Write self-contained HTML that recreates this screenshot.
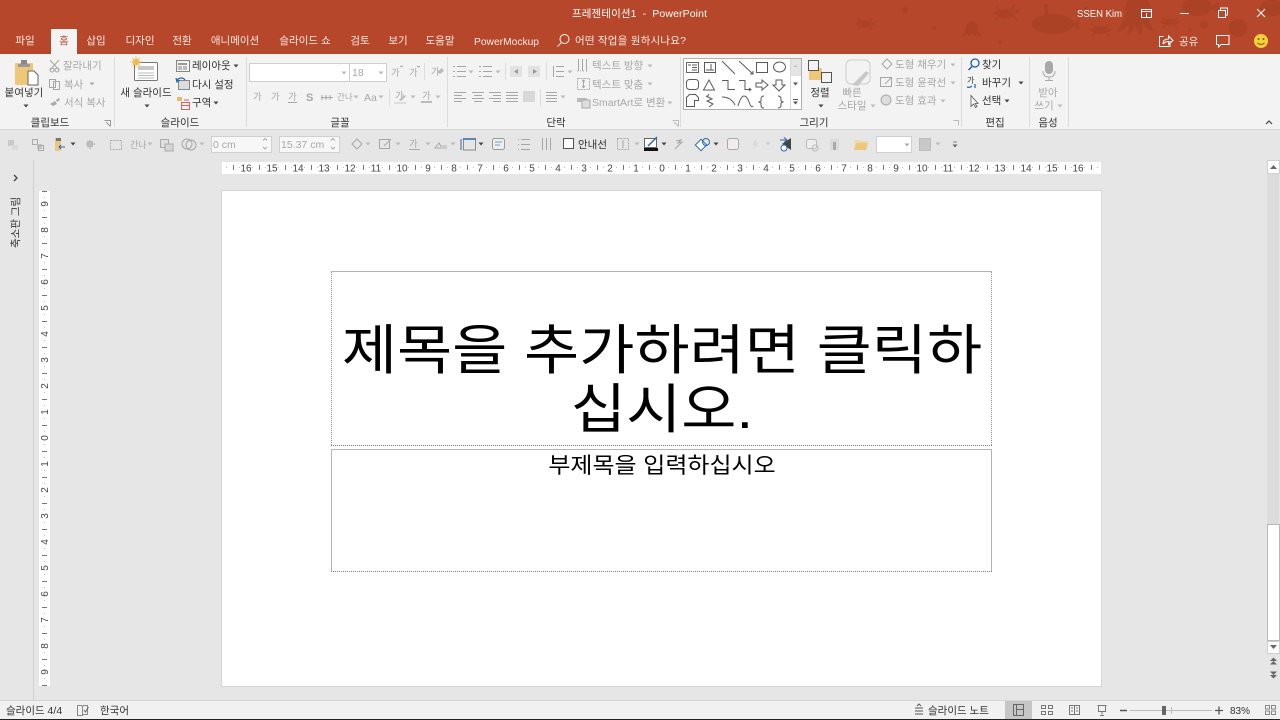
<!DOCTYPE html>
<html lang="ko"><head><meta charset="utf-8"><title>프레젠테이션1 - PowerPoint</title>
<style>
html,body{margin:0;padding:0;width:1280px;height:720px;overflow:hidden;background:#e6e6e6}
svg{display:block}
text{font-family:"Liberation Sans","Noto Sans CJK KR",sans-serif;font-size:10.5px;white-space:pre}
.g{fill:#a8a8a8}.d{fill:#333}.w{fill:#fff}.w2{fill:#fbe9e3}
.m{text-anchor:middle}
.ln{fill:none;stroke:#a6a6a6;stroke-width:1}
.dk{fill:none;stroke:#555;stroke-width:1}
.bl{fill:none;stroke:#2b6aa8;stroke-width:1.3}
.wl{fill:none;stroke:#fff;stroke-width:1}
.sep{stroke:#dcdcdc;stroke-width:1}
.r{font-size:10px;fill:#444;text-anchor:middle}
</style></head><body>
<svg width="1280" height="720" viewBox="0 0 1280 720" xmlns="http://www.w3.org/2000/svg">
<defs>
<path id="a" d="M-2.5-1.5h5l-2.500 3z"/>
<pattern id="ht" x="662" y="162" width="26" height="12" patternUnits="userSpaceOnUse">
<rect x="6" y="5" width="1" height="1" fill="#bbb"/><rect x="13" y="3" width="1" height="5" fill="#777"/><rect x="19" y="5" width="1" height="1" fill="#bbb"/>
</pattern>
<pattern id="vt" x="39" y="438" width="11" height="26" patternUnits="userSpaceOnUse">
<rect x="5" y="6" width="1" height="1" fill="#bbb"/><rect x="3" y="13" width="5" height="1" fill="#777"/><rect x="5" y="19" width="1" height="1" fill="#bbb"/>
</pattern>
</defs>

<!-- backgrounds -->
<rect width="1280" height="720" fill="#e6e6e6"/>
<rect width="1280" height="54" fill="#b7472a"/>
<rect y="54" width="1280" height="75" fill="#f3f3f3"/>
<rect y="129" width="1280" height="1" fill="#d6d6d6"/>

<!-- title bar decoration -->
<g fill="#ab4226">
<ellipse cx="1053" cy="24" rx="21" ry="10"/><path d="M1072 24l7-6v12z"/><rect x="1045" y="8" width="3" height="8"/><circle cx="1046" cy="6" r="2.500"/>
<circle cx="1138" cy="9" r="13"/><path d="M1126 12q-6 16-10 20q8 0 13-9q-1 8-2 13q6-3 8-12q2 9 6 12q2-6 1-13q5 8 13 8q-6-6-9-19z"/>
<circle cx="972" cy="27" r="6"/><path d="M966 29q-3 6-5 8q5 0 7-4v4q3-2 4-4q1 3 4 4v-4q2 4 7 4q-3-3-6-8z"/>
<ellipse cx="1005" cy="14" rx="7" ry="5"/><path d="M996 6l4 5-6 2 6 2-5 5M1015 4l-4 6 7 1-6 4 5 5" fill="none" stroke="#ab4226" stroke-width="1.600"/>
<ellipse cx="1100" cy="30" rx="6" ry="4"/><path d="M1091 23l5 5-6 2 6 2-4 4M1109 24l-4 4 6 2-6 2 5 4" fill="none" stroke="#ab4226" stroke-width="1.500"/>
<ellipse cx="865" cy="24" rx="5" ry="4"/><path d="M857 18l4 4-5 2 5 2-4 4M873 18l-4 4 5 2-5 2 4 4" fill="none" stroke="#ab4226" stroke-width="1.400"/>
<ellipse cx="1170" cy="22" rx="5" ry="3.500"/><path d="M1162 17l4 4-5 1 5 2-3 4M1178 17l-4 4 5 1-5 2 3 4" fill="none" stroke="#ab4226" stroke-width="1.400"/>
<ellipse cx="1197" cy="7" rx="15" ry="9"/><path d="M1210 8l9-7v13z"/>
<ellipse cx="1272" cy="8" rx="12" ry="8"/>
<circle cx="1238" cy="28" r="9"/><circle cx="1204" cy="25" r="4"/><circle cx="905" cy="10" r="3"/><circle cx="934" cy="28" r="2"/><circle cx="1000" cy="42" r="2"/><circle cx="1086" cy="8" r="2"/><circle cx="1190" cy="30" r="1.500"/>
</g>

<!-- title text -->
<text x="572" y="17" class="w" textLength="135" lengthAdjust="spacing">프레젠테이션1  -  PowerPoint</text>
<text x="1077" y="17" class="w" textLength="45" lengthAdjust="spacingAndGlyphs">SSEN Kim</text>
<!-- window buttons -->
<path class="wl" d="M1141.500 9.500h10v8h-10zM1141.500 11.500h10M1146.500 17v-4"/>
<path class="wl" d="M1180 13.500h9"/>
<path class="wl" d="M1218.500 10.500h7v7h-7zM1220.500 10v-2h7v7h-2"/>
<path class="wl" d="M1257 9l8 8M1265 9l-8 8"/>

<!-- tabs -->
<rect x="51" y="29" width="26" height="25" fill="#f3f3f3"/>
<text x="25" y="44" class="m w2">파일</text>
<text x="96" y="44" class="m w2">삽입</text>
<text x="140" y="44" class="m w2">디자인</text>
<text x="182" y="44" class="m w2">전환</text>
<text x="235" y="44" class="m w2">애니메이션</text>
<text x="305" y="44" class="m w2">슬라이드 쇼</text>
<text x="360" y="44" class="m w2">검토</text>
<text x="398" y="44" class="m w2">보기</text>
<text x="440" y="44" class="m w2">도움말</text>
<text x="474" y="45" class="w2" textLength="65" lengthAdjust="spacingAndGlyphs">PowerMockup</text>
<text x="575" y="44" class="w2" textLength="111" lengthAdjust="spacing">어떤 작업을 원하시나요?</text>
<text x="64" y="44" class="m" fill="#b7472a">홈</text>
<circle cx="564.500" cy="39" r="4.500" class="wl"/><path class="wl" d="M561 43l-3.500 3.500"/>
<path class="wl" d="M1170 41v5.500h-10.500v-10h4M1163 44q0-5 5.500-5v-3l4.500 4.500-4.500 4v-3q-3 0-5.500 2.500"/>
<text x="1179" y="45" class="w2">공유</text>
<path class="wl" d="M1216.500 35.500h12.500v9h-8l-2.500 2.500v-2.500h-2z"/>
<circle cx="1261" cy="41" r="7" fill="#f7d038"/><circle cx="1258.500" cy="39" r="1" fill="#6a5a10"/><circle cx="1263.500" cy="39" r="1" fill="#6a5a10"/><path d="M1257.500 43q3.500 3 7 0" fill="none" stroke="#6a5a10"/>

<!-- group separators -->
<path class="sep" d="M114.500 57v70M246.500 57v70M447.500 57v70M680.500 57v70M961.500 57v70M1029.500 57v70M1068.500 57v70"/>

<!-- clipboard -->
<rect x="15" y="63" width="18" height="22" rx="1" fill="#eec778"/><rect x="21" y="60" width="6" height="5" fill="#888"/><rect x="18" y="64" width="12" height="3" fill="#999"/>
<path d="M28 71h6l4 4v10h-10z" fill="#fff" stroke="#666"/>
<text x="24" y="96" class="m d">붙여넣기</text><use href="#a" x="26" y="106" fill="#444"/>
<path class="ln" d="M50 60l9 10M59 60l-9 10"/><circle cx="52" cy="70" r="2" class="ln"/><circle cx="57" cy="70" r="2" class="ln"/>
<text x="63" y="69" class="g">잘라내기</text>
<path class="ln" d="M49.500 79.500h6v8h-6zM53.500 81.500h6v8h-6z"/>
<text x="64" y="88" class="g">복사</text><use href="#a" x="92" y="84" fill="#aaa"/>
<path d="M50 104l5-3 2 3-4 2zM56 100l3-2 1 2-3 2z" fill="#aaa"/>
<text x="64" y="106" class="g">서식 복사</text>
<text x="50" y="126" class="m d">클립보드</text>
<path d="M104.500 120.500h6v6M106 122l4 4" fill="none" stroke="#999"/>

<!-- slides -->
<rect x="134.500" y="62.500" width="23" height="18" rx="1" fill="#fff" stroke="#777"/><rect x="138" y="66" width="16" height="4" fill="#c8c8c8"/><path d="M138 73h16M138 75.500h16M138 78h16" stroke="#bbb"/>
<circle cx="136" cy="62" r="3.500" fill="#f3c55f"/><path d="M136 56v12M130 62h12M132 58l8 8M140 58l-8 8" stroke="#eeb84a" stroke-width=".8"/>
<text x="146" y="96" class="m d">새 슬라이드</text><use href="#a" x="147" y="106" fill="#444"/>
<path class="dk" d="M176.500 60.500h13v11h-13z" stroke-opacity=".7"/><rect x="178" y="63" width="9" height="2" fill="#999"/><rect x="178" y="66" width="4" height="4" fill="#bbb"/><rect x="183" y="66" width="4" height="4" fill="#bbb"/>
<text x="192" y="69" class="d">레이아웃</text><use href="#a" x="236" y="66" fill="#444"/>
<rect x="178.500" y="80.500" width="11" height="9" fill="#ddd" stroke="#888"/><path class="bl" d="M177 81q1-3 4-3t4 2M176 78l1 4 3-2"/>
<text x="192" y="88" class="d">다시 설정</text>
<rect x="177" y="97" width="5" height="4" fill="#f0b968"/><path d="M181.500 102.500h8v7h-8zM181.500 105.500h8" fill="none" stroke="#c66"/><path d="M184 100h5" stroke="#c66"/>
<text x="192" y="106" class="d">구역</text><use href="#a" x="216" y="103" fill="#444"/>
<text x="180" y="126" class="m d">슬라이드</text>

<!-- font -->
<rect x="249.500" y="63.500" width="100" height="18" fill="#fff" stroke="#cfcfcf"/><rect x="349.500" y="63.500" width="37" height="18" fill="#fff" stroke="#cfcfcf"/>
<use href="#a" x="344" y="73" fill="#bbb"/><use href="#a" x="381" y="73" fill="#bbb"/>
<text x="352" y="76" class="g">18</text>
<text x="391" y="76" class="g" style="font-size:9.500px">가</text><path class="ln" d="M400 67l1.500-1 1.500 1"/>
<text x="409" y="76" class="g" style="font-size:9.500px">가</text><path class="ln" d="M417 66l1.500 1 1.500-1"/>
<path class="sep" d="M424.500 63v17"/>
<text x="431" y="75" class="g" style="font-size:9.500px">가</text><path d="M437 72l5-4 2 3-4 3z" fill="#bbb"/>
<text x="253" y="100" class="g" style="font-size:9.500px">가</text>
<text x="271" y="100" class="g" style="font-size:9.500px">가</text>
<text x="288" y="100" class="g" style="font-size:9.500px">가</text>
<path class="ln" d="M288 102.500h9"/>
<text x="306" y="101" class="g" style="font-weight:bold;font-size:11px">S</text>
<path class="ln" d="M321 97.500h12M322 95v5M326 95v5M330 95v5"/>
<text x="337" y="100" class="g" style="font-size:8.500px">간나</text><use href="#a" x="356" y="97" fill="#bbb"/>
<text x="364" y="101" class="g">Aa</text><use href="#a" x="381" y="97" fill="#bbb"/>
<path class="sep" d="M389.500 89v17"/>
<text x="395" y="99" class="g" style="font-size:9.500px">가</text><path d="M399 100l5-5 2 1-5 5z" fill="#bbb"/><rect x="394" y="102" width="12" height="2" fill="#ddd"/><use href="#a" x="413" y="97" fill="#bbb"/>
<text x="422" y="99" class="g" style="font-size:9.500px">가</text><rect x="421" y="101" width="11" height="2" fill="#bbb"/><use href="#a" x="438" y="97" fill="#bbb"/>
<text x="340" y="126" class="m d">글꼴</text>

<!-- paragraph -->
<path class="ln" d="M457 66.500h9M457 71.500h9M457 76.500h9M453 66.500h2M453 71.500h2M453 76.500h2"/><use href="#a" x="471" y="72" fill="#bbb"/>
<path class="ln" d="M483 66.500h9M483 71.500h9M483 76.500h9M479 66.500h2M479 71.500h2M479 76.500h2"/><use href="#a" x="498" y="72" fill="#bbb"/>
<path class="sep" d="M505.500 63v17"/>
<rect x="510" y="66" width="12" height="11" fill="#e2e2e2"/><path d="M518 69l-4 2.500 4 2.500z" fill="#999"/>
<rect x="528" y="66" width="12" height="11" fill="#e2e2e2"/><path d="M533 69l4 2.500-4 2.500z" fill="#999"/>
<path class="sep" d="M546.500 63v17"/>
<path class="ln" d="M556 66.500h8M556 71.500h8M556 76.500h8M553.500 66v11"/><use href="#a" x="570" y="72" fill="#bbb"/>
<path class="ln" d="M454 92.500h12M454 95.500h8M454 98.500h12M454 101.500h8"/>
<path class="ln" d="M472 92.500h12M474 95.500h8M472 98.500h12M474 101.500h8"/>
<path class="ln" d="M489 92.500h12M493 95.500h8M489 98.500h12M493 101.500h8"/>
<path class="ln" d="M506 92.500h12M506 95.500h12M506 98.500h12M506 101.500h12"/>
<rect x="523" y="91" width="12" height="11" fill="#d8d8d8"/>
<path class="sep" d="M540.500 89v17"/>
<path class="ln" d="M546 92.500h11M546 95.500h11M546 98.500h11M546 101.500h11"/><use href="#a" x="563" y="97" fill="#bbb"/>
<path class="ln" d="M578.500 59v12M582.500 59v12M586.500 59v12"/><path d="M577 71h11" stroke="#aaa" stroke-dasharray="1 2"/>
<text x="592" y="69" class="g">텍스트 방향</text><use href="#a" x="650" y="66" fill="#bbb"/>
<rect x="577.500" y="78.500" width="12" height="11" fill="none" stroke="#aaa" stroke-dasharray="2 1"/><path class="ln" d="M583.500 80v7M582 81.500l1.500-1.500 1.500 1.500M582 86l1.500 1.500 1.500-1.500"/>
<text x="592" y="88" class="g">텍스트 맞춤</text><use href="#a" x="650" y="84" fill="#bbb"/>
<path d="M577 98h10v4h-10z" fill="#bbb"/><rect x="582" y="100" width="8" height="8" fill="#ddd" stroke="#aaa"/>
<text x="592" y="106" class="g">SmartArt로 변환</text><use href="#a" x="670" y="103" fill="#bbb"/>
<text x="556" y="126" class="m d">단락</text>
<path d="M672.500 120.500h6v6M674 122l4 4" fill="none" stroke="#bbb"/>

<!-- shape gallery -->
<rect x="683.500" y="58.500" width="118" height="51" fill="#fff" stroke="#b0b0b0"/>
<rect x="790" y="59" width="11" height="17" fill="#e4e4e4"/>
<path d="M790.500 59v50" stroke="#d8d8d8"/>
<path d="M795.500 65l-2 2h4z" fill="#bbb"/><use href="#a" x="795.500" y="84" fill="#555"/>
<path d="M793 99.500h5" stroke="#555"/><use href="#a" x="795.500" y="103" fill="#555"/>
<g fill="none" stroke="#5a5a5a">
<rect x="686.500" y="62.500" width="12" height="10" stroke="#666"/><path d="M692 65h5M692 67.500h5M692 70h5M688 65h3"/>
<rect x="704.500" y="62.500" width="11" height="10"/><path d="M706 70h8M711 64v6"/>
<path d="M722 61l13 13M739 61l14 13"/><path d="M750 74h3v-3"/>
<rect x="756.500" y="62.500" width="11" height="10"/>
<ellipse cx="779.500" cy="67" rx="6" ry="5"/>
<rect x="686.500" y="79.500" width="12" height="10" rx="3"/>
<path d="M703.500 90l5.500-10 5.500 10z"/>
<path d="M722 80.500h6v9h7"/>
<path d="M739 80.500h6v9h6M749 88l2 1.500-2 1.500"/>
<path d="M756 83h6v-3l6 5-6 5v-3h-6z"/>
<path d="M776 80h6v5h3l-6 6-6-6h3z"/>
<path d="M686.500 106.500v-9l3-3h6l3 3v3h-4v6z"/>
<path d="M706 96l6 3-5 2 6 3-4 3M709 94l-2 3"/>
<path d="M722 97q9 0 13 8"/>
<path d="M738 106q3-10 6-10t5 6 4 4"/>
<path d="M764 96q-3 0-3 3v2l-2 1 2 1v2q0 3 3 3"/>
<path d="M778 96q3 0 3 3v2l2 1-2 1v2q0 3-3 3"/>
</g>

<!-- arrange -->
<rect x="809" y="68" width="13" height="12" fill="#eec778"/>
<rect x="808.500" y="60.500" width="10" height="10" fill="#f3f3f3" stroke="#555"/>
<rect x="821.500" y="72.500" width="10" height="10" fill="#f3f3f3" stroke="#555"/>
<text x="820" y="96" class="m d">정렬</text><use href="#a" x="821" y="106" fill="#444"/>
<rect x="846" y="60" width="24" height="24" rx="5" fill="#f3f3f3" stroke="#ccc"/><path d="M852 85l14-14 3 2-11 13z" fill="#c8c8c8"/>
<text x="852" y="96" class="m g">빠른</text><text x="852" y="109" class="m g">스타일</text><use href="#a" x="873" y="106" fill="#bbb"/>
<path class="ln" d="M882 64l5-5 5 5-5 5z"/><text x="895" y="68" class="g">도형 채우기</text><use href="#a" x="953" y="65" fill="#bbb"/>
<path class="ln" d="M880.500 77.500h11v9h-11z"/><path d="M885 84l7-7" stroke="#aaa"/><text x="895" y="86" class="g">도형 윤곽선</text><use href="#a" x="953" y="83" fill="#bbb"/>
<circle cx="886" cy="100" r="5" fill="#ddd" stroke="#aaa"/><text x="895" y="104" class="g">도형 효과</text><use href="#a" x="943" y="101" fill="#bbb"/>
<text x="814" y="126" class="m d">그리기</text>
<path d="M953.500 120.500h5v5" fill="none" stroke="#bbb"/>

<!-- edit -->
<circle cx="975" cy="63" r="4" fill="none" stroke="#1f5f9f" stroke-width="1.300"/><path d="M972 66.500l-3.500 3.500" stroke="#1f5f9f" stroke-width="1.500"/>
<text x="982" y="68" class="d">찾기</text>
<text x="967" y="83" style="font-size:8px" class="d">가</text><path class="bl" d="M967 87q3 1 5-1M975 84v4"/>
<text x="982" y="86" class="d">바꾸기</text><use href="#a" x="1021" y="83" fill="#444"/>
<path d="M971 95.500v11l2.500-2.500 2 3.500 1.500-1-2-3h3z" fill="#fff" stroke="#555" stroke-width=".8"/>
<text x="982" y="104" class="d">선택</text><use href="#a" x="1007" y="101" fill="#444"/>
<text x="995" y="126" class="m d">편집</text>

<!-- voice -->
<rect x="1045" y="61" width="8" height="13" rx="4" fill="#a9a9a9"/><path d="M1043 71q0 6 6 6t6-6M1049 77v3M1045 80.500h8" fill="none" stroke="#a9a9a9"/>
<text x="1048" y="96" class="m g">받아</text><text x="1044" y="109" class="m g">쓰기</text><use href="#a" x="1060" y="106" fill="#bbb"/>
<text x="1048" y="126" class="m d">음성</text>
<path d="M1266 124l3-3 3 3" fill="none" stroke="#444" stroke-width="1.200"/>

<!-- second toolbar -->
<path d="M8 140h6v6h-6z" fill="#c9c9c9"/><path d="M12 145h6v5h-6z" fill="#dadada"/>
<path d="M32.500 139.500h5v5h-5z" fill="none" stroke="#aaa"/><rect x="37" y="144" width="5" height="5" fill="#c4c4c4"/><path d="M38.500 145.500h5v5h-5z" fill="none" stroke="#aaa"/>
<rect x="55" y="138" width="6" height="13" fill="#e8c883"/><path d="M56 138h5v3h-5z" fill="#777"/><path d="M59 147h6M59 147l2-2M59 147l2 2" stroke="#2b6aa8"/><use href="#a" x="73" y="144" fill="#444"/>
<path class="ln" d="M86 144h9M90 140v9"/><rect x="87" y="141" width="6" height="6" fill="#bbb"/>
<rect x="110.500" y="140.500" width="11" height="9" fill="none" stroke="#aaa" stroke-dasharray="2 1"/>
<text x="130" y="148" class="g" style="font-size:9px">간나</text><use href="#a" x="150" y="144" fill="#bbb"/>
<rect x="160.500" y="139.500" width="8" height="8" fill="#e0e0e0" stroke="#aaa"/><rect x="165" y="144" width="8" height="7" fill="#d6d6d6" stroke="#aaa"/>
<circle cx="187" cy="144" r="5" class="ln"/><circle cx="191" cy="145" r="5" class="ln"/><use href="#a" x="202" y="144" fill="#bbb"/>
<rect x="211.500" y="136.500" width="60" height="16" fill="#f7f7f7" stroke="#d0d0d0"/><text x="213" y="148" class="g">0 cm</text>
<path d="M263 140.500l2-2 2 2M263 147l2 2 2-2" fill="none" stroke="#aaa"/>
<rect x="279.500" y="136.500" width="60" height="16" fill="#f7f7f7" stroke="#d0d0d0"/><text x="281" y="148" class="g">15.37 cm</text>
<path d="M331 140.500l2-2 2 2M331 147l2 2 2-2" fill="none" stroke="#aaa"/>
<path class="ln" d="M352 144l5-5 5 5-5 5z"/><use href="#a" x="368" y="144" fill="#bbb"/>
<path class="ln" d="M379.500 139.500h10v9h-10z"/><path d="M384 146l7-7" stroke="#aaa"/><use href="#a" x="398" y="144" fill="#bbb"/>
<text x="409" y="147" class="g" style="font-size:9.500px">가</text><rect x="409" y="149" width="11" height="1" fill="#aaa"/><use href="#a" x="428" y="144" fill="#bbb"/>
<path class="ln" d="M435 148l4-5 3 5z"/><rect x="441" y="145" width="6" height="4" fill="#ccc"/><use href="#a" x="453" y="144" fill="#bbb"/>
<rect x="463.500" y="139" width="12" height="11" fill="none" stroke="#888"/><path d="M463 139h13" stroke="#2b6aa8" stroke-width="1.500"/><path d="M461 139v11" stroke="#2b6aa8"/><use href="#a" x="481" y="144" fill="#444"/>
<rect x="492.500" y="138.500" width="12" height="11" rx="2" fill="#eee" stroke="#999"/><path d="M495 142h7M495 145h5" stroke="#7a9cc0"/>
<path class="ln" d="M521 139.500h9M521 144.500h9M521 149.500h9M518 139.500h1M518 144.500h1M518 149.500h1"/>
<path class="ln" d="M542.500 138v12M546.500 138v12M550.500 138v12"/>
<rect x="563.500" y="138.500" width="10" height="10" fill="#fff" stroke="#555"/>
<text x="578" y="148" class="d">안내선</text>
<rect x="617.500" y="138.500" width="11" height="11" fill="none" stroke="#aaa" stroke-dasharray="2 1"/><path class="ln" d="M623 140v8"/><use href="#a" x="637" y="144" fill="#bbb"/>
<rect x="644.500" y="138.500" width="12" height="9" fill="#fff" stroke="#666"/><path d="M648 146l9-9" stroke="#2b6aa8" stroke-width="1.500"/><rect x="644" y="148" width="14" height="3" fill="#111"/><use href="#a" x="664" y="144" fill="#444"/>
<path class="ln" d="M676 141l5-1-3 3 4-1-7 7"/>
<rect x="697" y="141" width="8" height="8" fill="#fff" stroke="#2b6aa8" transform="rotate(45 701 145)"/><circle cx="706" cy="142" r="3.500" fill="none" stroke="#2b6aa8"/><use href="#a" x="716" y="144" fill="#444"/>
<rect x="727.500" y="138.500" width="11" height="11" rx="2" fill="#f0ecf0" stroke="#aaa"/>
<path d="M757 138l-5 7h3l-2 5 6-7h-3z" fill="#dadada"/><use href="#a" x="768" y="144" fill="#ccc"/>
<path d="M782 144l9-6v12z" fill="#444"/><circle cx="784" cy="148" r="3" fill="#fff" stroke="#2b6aa8"/><path d="M780 140h6M784 137.500l3 2.500-3 2.500" fill="none" stroke="#2b6aa8"/>
<rect x="806.500" y="139.500" width="10" height="9" rx="2" fill="#eee" stroke="#bbb"/><circle cx="815" cy="148" r="3" fill="none" stroke="#bbb"/>
<rect x="830" y="139" width="9" height="11" fill="#dadada"/><rect x="833" y="142" width="3" height="8" fill="#aaa"/>
<path d="M854 140h5l1 1h8l-1 2h-12z" fill="#f0d9a8"/><path d="M854 150l2-7h12l-2 7z" fill="#eec778"/>
<rect x="876.500" y="136.500" width="35" height="16" fill="#fff" stroke="#d0d0d0"/><use href="#a" x="907" y="145" fill="#aaa"/>
<rect x="919.500" y="138.500" width="11" height="12" fill="#c8c8c8" stroke="#bbb"/><use href="#a" x="938" y="144" fill="#bbb"/>
<path d="M953 142h4" stroke="#888"/><use href="#a" x="955" y="146" fill="#666"/>

<!-- sidebar -->
<path d="M33.500 160v540" stroke="#d0d0d0"/>
<path d="M14 175l3 3-3 3" fill="none" stroke="#444" stroke-width="1.300"/>
<text transform="translate(19 248) rotate(-90)" class="d" style="font-size:10.500px">축소판 그림</text>

<!-- rulers -->
<rect x="222" y="162" width="879" height="12" fill="#fff"/>
<rect x="222" y="162" width="879" height="12" fill="url(#ht)"/>
<text class="r" x="246" y="171.500">16</text><text class="r" x="272" y="171.500">15</text><text class="r" x="298" y="171.500">14</text><text class="r" x="324" y="171.500">13</text><text class="r" x="350" y="171.500">12</text><text class="r" x="376" y="171.500">11</text><text class="r" x="402" y="171.500">10</text><text class="r" x="428" y="171.500">9</text><text class="r" x="454" y="171.500">8</text><text class="r" x="480" y="171.500">7</text><text class="r" x="506" y="171.500">6</text><text class="r" x="532" y="171.500">5</text><text class="r" x="558" y="171.500">4</text><text class="r" x="584" y="171.500">3</text><text class="r" x="610" y="171.500">2</text><text class="r" x="636" y="171.500">1</text><text class="r" x="662" y="171.500">0</text><text class="r" x="688" y="171.500">1</text><text class="r" x="714" y="171.500">2</text><text class="r" x="740" y="171.500">3</text><text class="r" x="766" y="171.500">4</text><text class="r" x="792" y="171.500">5</text><text class="r" x="818" y="171.500">6</text><text class="r" x="844" y="171.500">7</text><text class="r" x="870" y="171.500">8</text><text class="r" x="896" y="171.500">9</text><text class="r" x="922" y="171.500">10</text><text class="r" x="948" y="171.500">11</text><text class="r" x="974" y="171.500">12</text><text class="r" x="1000" y="171.500">13</text><text class="r" x="1026" y="171.500">14</text><text class="r" x="1052" y="171.500">15</text><text class="r" x="1078" y="171.500">16</text>
<rect x="39" y="191" width="11" height="495" fill="#fff"/>
<rect x="39" y="191" width="11" height="495" fill="url(#vt)"/>
<text class="r" transform="translate(48 204) rotate(-90)">9</text><text class="r" transform="translate(48 230) rotate(-90)">8</text><text class="r" transform="translate(48 256) rotate(-90)">7</text><text class="r" transform="translate(48 282) rotate(-90)">6</text><text class="r" transform="translate(48 308) rotate(-90)">5</text><text class="r" transform="translate(48 334) rotate(-90)">4</text><text class="r" transform="translate(48 360) rotate(-90)">3</text><text class="r" transform="translate(48 386) rotate(-90)">2</text><text class="r" transform="translate(48 412) rotate(-90)">1</text><text class="r" transform="translate(48 438) rotate(-90)">0</text><text class="r" transform="translate(48 464) rotate(-90)">1</text><text class="r" transform="translate(48 490) rotate(-90)">2</text><text class="r" transform="translate(48 516) rotate(-90)">3</text><text class="r" transform="translate(48 542) rotate(-90)">4</text><text class="r" transform="translate(48 568) rotate(-90)">5</text><text class="r" transform="translate(48 594) rotate(-90)">6</text><text class="r" transform="translate(48 620) rotate(-90)">7</text><text class="r" transform="translate(48 646) rotate(-90)">8</text><text class="r" transform="translate(48 672) rotate(-90)">9</text>

<!-- slide -->
<rect x="221.500" y="190.500" width="880" height="496" fill="#fff" stroke="#d4d4d4"/>
<path d="M331 271.500h661" fill="none" stroke="#b4b4b4"/>
<path d="M331.500 272v174M991.500 272v174" fill="none" stroke="#8c8c8c" stroke-dasharray="1 1"/>
<path d="M331 445.500h661" fill="none" stroke="#808080" stroke-dasharray="1 1"/>
<path d="M331 449.500h661" fill="none" stroke="#b4b4b4"/>
<path d="M331.500 450v121M991.500 450v121" fill="none" stroke="#b4b4b4"/>
<path d="M331 571.500h661" fill="none" stroke="#808080" stroke-dasharray="1 1"/>
<text class="m" fill="#000" transform="translate(662 369) scale(1 .9)" style="font-size:60px">제목을 추가하려면 클릭하</text>
<text class="m" fill="#000" transform="translate(662 428) scale(1 .9)" style="font-size:60px">십시오.</text>
<text class="m" fill="#000" transform="translate(662 473) scale(1 .92)" style="font-size:24px">부제목을 입력하십시오</text>

<!-- scrollbar -->
<rect x="1267" y="173" width="12" height="351" fill="#dcdcdc"/>
<rect x="1267.500" y="160.500" width="12" height="13" fill="#fff" stroke="#d0d0d0"/><path d="M1273.500 165l-3.500 4h7z" fill="#666"/>
<rect x="1267.500" y="524.500" width="12" height="116" fill="#fff" stroke="#b8b8b8"/>
<rect x="1267.500" y="641.500" width="12" height="12" fill="#fff" stroke="#d0d0d0"/><path d="M1270 645h7l-3.500 4z" fill="#666"/>
<path d="M1270 661l3.500-3.500 3.500 3.500zM1270 664.500l3.500-3.500 3.500 3.500zM1270 675h7l-3.500 3.500zM1270 671.500h7l-3.500 3.500z" fill="#666"/>

<!-- status bar -->
<rect y="700" width="1280" height="19" fill="#f1f1f1"/><rect y="700" width="1280" height="1" fill="#d6d6d6"/>
<rect y="719" width="1280" height="1" fill="#222"/>
<text x="6" y="714" class="d">슬라이드 4/4</text>
<path d="M77.500 705.500h4l1 1v9h-5zM82.500 706.500l1-1h4v9h-5" fill="none" stroke="#888"/><path d="M84 710l1.500 2 3-5" fill="none" stroke="#666"/>
<text x="100" y="714" class="d">한국어</text>
<path d="M915 708h8M915 711h8M915 714h8M917 706l2-2 2 2" fill="none" stroke="#555"/>
<text x="928" y="714" class="d">슬라이드 노트</text>
<rect x="1005" y="701" width="27" height="18" fill="#c6c6c6"/>
<path d="M1013.500 704.500h10v11h-10zM1016.500 704.500v11M1016.500 709.500h7" fill="none" stroke="#666"/>
<path d="M1041.500 705.500h4v3h-4zM1048.500 705.500h4v3h-4zM1041.500 711.500h4v3h-4zM1048.500 711.500h4v3h-4z" fill="none" stroke="#777"/>
<path d="M1069.500 705.500h10v9h-10zM1074.500 705.500v9M1071 708h2M1076 708h2M1071 711h2M1076 711h2" fill="none" stroke="#777"/>
<path d="M1097.500 705.500h9M1098.500 705.500v6h7v-6M1102 711.500v3M1100 715.500h4" fill="none" stroke="#777"/>
<path d="M1120 710.500h7" stroke="#555" stroke-width="1.500"/>
<path d="M1130 710.500h82" stroke="#bbb"/><path d="M1171.500 707v7" stroke="#bbb"/>
<rect x="1162" y="706" width="4" height="9" fill="#666"/>
<path d="M1215 710.500h8M1219 706.500v8" stroke="#555" stroke-width="1.300"/>
<text x="1230" y="714" class="d" style="font-size:10px">83%</text>
<path d="M1265.500 705.500h4v3.500h-4zM1271.500 705.500h4v3.500h-4zM1265.500 711h4v3.500h-4zM1271.500 711h4v3.500h-4z" fill="none" stroke="#888"/>
</svg>
</body></html>
